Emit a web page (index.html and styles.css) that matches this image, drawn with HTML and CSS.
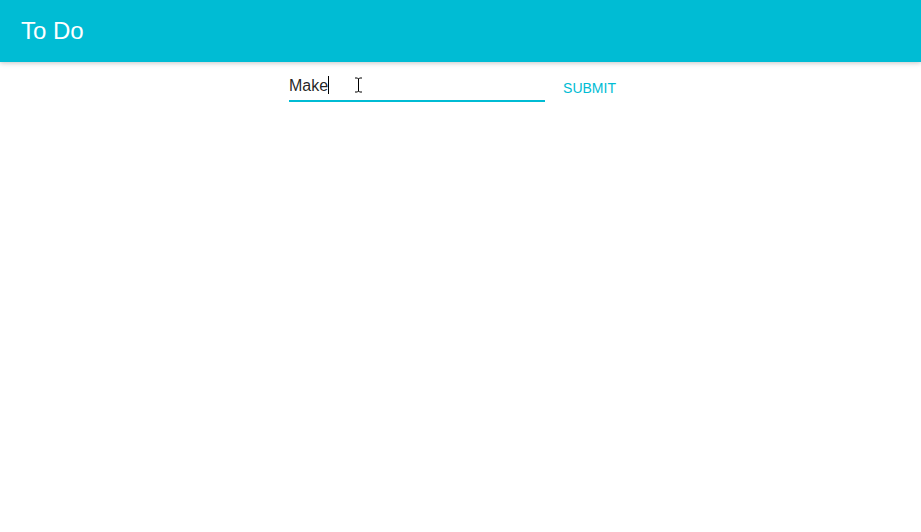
FILE: index.html
```html
<!DOCTYPE html>
<html>
<head>
<meta charset="utf-8">
<link rel="stylesheet" href="styles.css">
</head>
<body>
<header class="appbar"><h1 class="title">To Do</h1></header>
<main class="content">
  <form class="todo-form">
    <div class="field">
      <span class="value">Make</span><span class="caret"></span>
      <svg class="ibeam" width="9" height="16" viewBox="0 0 9 16"><path d="M1 1h2.5l1 1 1-1H8M4.5 2v12M1 15h2.5l1-1 1 1H8" fill="none" stroke="#000" stroke-width="1"/></svg>
    </div>
    <button type="button" class="submit">Submit</button>
  </form>
</main>
</body>
</html>
```
FILE: styles.css
```css
html, body { margin: 0; padding: 0; background: #fff; }
body { font-family: "Liberation Sans", Arial, sans-serif; }
.appbar {
  height: 62px;
  background: #00bcd4;
  display: flex;
  align-items: center;
  padding: 0 21px;
  box-shadow: 0 1px 6px rgba(0,0,0,0.12), 0 1px 4px rgba(0,0,0,0.12);
  position: relative;
}
.title { margin: 0; color: #fff; font-weight: 400; font-size: 24px; letter-spacing: 0; }
.content { display: flex; justify-content: center; padding: 8px 0 0 1px; }
.todo-form { display: flex; align-items: flex-start; }
.field {
  width: 256px; height: 30px;
  border-bottom: 2px solid #00bcd4;
  display: flex; align-items: center;
  position: relative;
  font-size: 16px; color: rgba(0,0,0,0.87);
}
.value { line-height: 20px; padding-top: 1px; }
.caret { width: 1px; height: 18px; background: #000; }
.ibeam { position: absolute; left: 65px; top: 7px; }
.submit {
  min-width: 87px; height: 36px; border: 0; background: transparent;
  color: #00bcd4; font-family: inherit; font-size: 14px; text-transform: uppercase;
  padding: 0 16px; margin: 0 0 0 1px; letter-spacing: 0;
}
```
